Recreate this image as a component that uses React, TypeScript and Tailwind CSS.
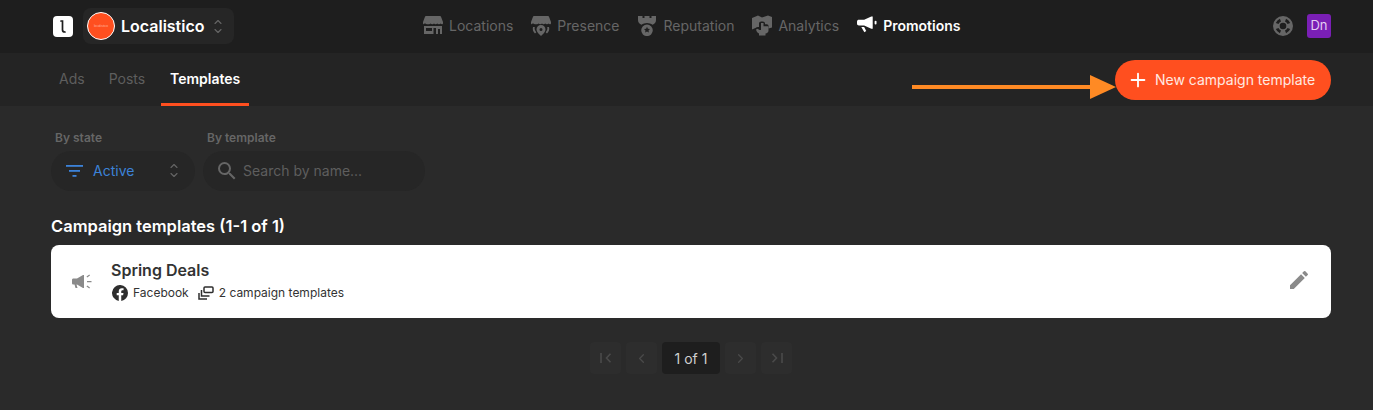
import { ChevronLeft, ChevronRight, Plus } from 'lucide-react';

function Awning() {
  return (
    <path d="M3 1h14a1 1 0 0 1 1 .7L20 7v1.200c0 .6-.5 1-1 1-.6 0-1-.5-1.300-.8-.4.5-1 .8-1.700.8s-1.300-.3-1.700-.8c-.4.5-1 .8-1.700.8s-1.300-.3-1.600-.8c-.4.5-1 .8-1.700.8s-1.300-.3-1.700-.8c-.4.5-1 .8-1.700.8S2.900 9 2.300 8.400 1 9.200 1 9.200c-.5 0-1-.4-1-1V7l2-5.300A1 1 0 0 1 3 1z" />
  );
}

function LocationsIcon() {
  return (
    <svg width="20" height="20" viewBox="0 0 20 20" fill="currentColor">
      <Awning />
      <path fillRule="evenodd" d="M1 11h18v8h-6v-6h-2.500v6H1v-8zm2 2v3h6v-3H3zm12 1v5h2v-5h-2z" />
    </svg>
  );
}

function PresenceIcon() {
  return (
    <svg width="20" height="21" viewBox="0 0 20 21" fill="currentColor">
      <Awning />
      <path fillRule="evenodd" d="M10 10a4.500 4.500 0 0 1 4.500 4.500c0 2.500-2.500 4.800-4.500 6.500-2-1.700-4.500-4-4.500-6.500A4.500 4.500 0 0 1 10 10zm0 3a1.500 1.500 0 1 0 0 3 1.500 1.500 0 0 0 0-3z" />
      <path d="M2 12h1.800c-.6 2 .2 3.600 1.500 5.200L4 18.500C2 16.500 1.300 14.500 2 12zM18 12h-1.800c.6 2-.2 3.600-1.500 5.200l1.300 1.300c2-2 2.700-4 2-6.500z" />
    </svg>
  );
}

function ReputationIcon() {
  return (
    <svg width="20" height="21" viewBox="0 0 20 21" fill="currentColor">
      <path d="M1 1h4.500v2h2V1h5v2h2V1H19v4c0 2.500-1.500 4-3.500 4.800C14 8.700 12 8 10 8s-4 .7-5.500 1.800C2.500 9 1 7.500 1 5V1z" />
      <path fillRule="evenodd" d="M10 9.500a5.800 5.800 0 1 1 0 11.600 5.800 5.800 0 0 1 0-11.600zm0 2.300l.9 1.900 2.100.3-1.500 1.500.4 2.100-1.900-1-1.900 1 .4-2.100L7 14l2.100-.3.900-1.900z" />
    </svg>
  );
}

function AnalyticsIcon() {
  return (
    <svg width="20" height="21" viewBox="0 0 20 21" fill="currentColor">
      <path d="M0 3l6-2.500 4 2 6-2 4 1.500v10.500l-3.500 1V11c0-1-.7-1.700-1.700-1.700H13V8.500c0-1.200-1-2-2.200-2h-1.600c-1.200 0-2.200.8-2.200 2V12H6c-1 0-1.800.5-2.600 1L0 14.500V3z" />
      <path d="M9 8h2.500v3.200h3.800c.6 0 1.200.5 1.200 1.200v3.100c0 1.600-1.300 3-3 3v2H7v-2c-1.200-.5-2-1.500-2.500-2.500L4 14.500l1.500-.8 2 1.300h1.500V8z" />
    </svg>
  );
}

function PromotionsIcon() {
  return (
    <svg width="20" height="20" viewBox="0 0 21 20" fill="currentColor">
      <path d="M0 6.500C0 5 1 4.500 2 4.500h5.500L15 1h1.500v13H15l-7.500-3.500H2c-1 0-2-.5-2-2V6.500z" />
      <rect x="18.500" y="5.500" width="2" height="4" rx="1" />
      <path d="M4.500 12h3l2.200 4.300-2 1.200L4.500 12z" />
    </svg>
  );
}

function HelpIcon() {
  return (
    <svg width="20" height="20" viewBox="0 0 20 20" fill="currentColor" className="text-[#666]">
      <path
        fillRule="evenodd"
        d="M10 0a10 10 0 1 1 0 20 10 10 0 0 1 0-20zm0 6.700a3.300 3.300 0 1 0 0 6.600 3.300 3.300 0 0 0 0-6.600zM6.900 2.800a8 8 0 0 0-4.100 4.100l2.700 1.100a5 5 0 0 1 2.500-2.500L6.900 2.800zm6.200 0L12 5.500A5 5 0 0 1 14.500 8l2.700-1.100a8 8 0 0 0-4.100-4.100zM5.500 12l-2.700 1.100a8 8 0 0 0 4.100 4.100L8 14.500A5 5 0 0 1 5.500 12zm9 0a5 5 0 0 1-2.500 2.500l1.100 2.700a8 8 0 0 0 4.100-4.100L14.500 12z"
      />
    </svg>
  );
}

function UpDown() {
  return (
    <svg width="8" height="15" viewBox="0 0 8 15" fill="none" stroke="#666" strokeWidth="1.100" strokeLinecap="round" strokeLinejoin="round">
      <path d="M1 4.500L4 1.500l3 3M1 10.500l3 3 3-3" />
    </svg>
  );
}

function PageIcon({ kind }: { kind: 'first' | 'prev' | 'next' | 'last' }) {
  return (
    <div className="flex h-8 w-[31px] items-center justify-center rounded bg-[#2d2d2d] text-[#4a4a4a]">
      {kind === 'prev' && <ChevronLeft size={15} strokeWidth={2} />}
      {kind === 'next' && <ChevronRight size={15} strokeWidth={2} />}
      {kind === 'first' && (
        <svg width="12" height="10" viewBox="0 0 12 10" fill="none" stroke="currentColor" strokeWidth="1.600">
          <path d="M1 0v10M10.500 .8L6.500 5l4 4.200" />
        </svg>
      )}
      {kind === 'last' && (
        <svg width="12" height="10" viewBox="0 0 12 10" fill="none" stroke="currentColor" strokeWidth="1.600">
          <path d="M11 0v10M1.500 .8L5.500 5l-4 4.200" />
        </svg>
      )}
    </div>
  );
}

export default function App() {
  const nav = [
    { label: 'Locations', icon: <LocationsIcon /> },
    { label: 'Presence', icon: <PresenceIcon /> },
    { label: 'Reputation', icon: <ReputationIcon /> },
    { label: 'Analytics', icon: <AnalyticsIcon /> },
  ];

  return (
    <div className="relative flex h-[410px] w-[1373px] flex-col overflow-hidden bg-[#2a2a2a] font-['Inter',sans-serif]">
      {/* top bar */}
      <header className="flex h-[53px] items-center bg-[#1e1e1e] pb-px pl-[53px] pr-[42px]">
        <div className="flex h-[21px] w-5 items-center justify-center rounded-[4px] bg-white">
          <svg width="8" height="13" viewBox="0 0 8 13" fill="none" stroke="#1e1e1e" strokeWidth="1.700" strokeLinecap="round">
            <path d="M2 1h1.500v9c0 1.300.8 2 2.500 2" />
          </svg>
        </div>
        <div className="ml-[10px] flex h-9 w-[151px] items-center rounded-lg bg-[#262626] pl-1">
          <div className="flex h-7 w-7 items-center justify-center rounded-full border-[1.500px] border-white bg-[#ff4f1f]">
            <span className="text-[3px] text-[#ffb9a3]">localistico</span>
          </div>
          <span className="ml-[6px] text-[16px] font-semibold text-white">Localistico</span>
          <span className="ml-[9px] flex">
            <UpDown />
          </span>
        </div>
        <nav className="-mt-[2px] ml-[189px] flex items-center gap-[18px]">
          {nav.map((item) => (
            <div key={item.label} className="flex items-center gap-[6px] text-[#666]">
              {item.icon}
              <span className="text-[14px]">{item.label}</span>
            </div>
          ))}
          <div className="flex items-center gap-[6px] text-white">
            <PromotionsIcon />
            <span className="text-[14px] font-semibold">Promotions</span>
          </div>
        </nav>
        <div className="ml-auto flex items-center gap-[14px]">
          <HelpIcon />
          <div className="flex h-6 w-6 items-center justify-center rounded-[3px] bg-[#7a1fb5] text-[13px] text-[#e4cdf3]">Dn</div>
        </div>
      </header>

      {/* sub nav */}
      <div className="flex h-[53px] items-center justify-between bg-[#242424] pl-[51px] pr-[42px]">
        <div className="flex h-full items-center pb-[2px]">
          <div className="px-2 text-[14px] text-[#5e5e5e]">Ads</div>
          <div className="ml-4 text-[14px] text-[#5e5e5e]">Posts</div>
          <div className="relative ml-4 flex h-full w-[88px] items-center justify-center text-[14px] font-semibold text-white">
            Templates
            <div className="absolute -bottom-[2px] left-0 right-0 h-[3px] bg-[#ff4f1f]" />
          </div>
        </div>
        <button className="flex h-10 w-[216px] items-center rounded-full bg-[#ff4f1f] pl-3 text-[14px] text-[#ffe9e1]">
          <Plus size={22} strokeWidth={2} className="text-white" />
          <span className="ml-[6px]">New campaign template</span>
        </button>
      </div>

      {/* filters */}
      <main className="flex flex-col pl-[51px] pr-[42px] pt-6">
        <div className="flex gap-2">
          <div className="flex flex-col">
            <label className="pl-1 text-[12px] font-semibold leading-4 text-[#666]">By state</label>
            <div className="mt-[5px] flex h-10 w-[144px] items-center rounded-full bg-[#262626] pb-px pl-[15px] pr-[17px]">
              <svg width="18" height="12" viewBox="0 0 18 12" fill="#3c82d8">
                <rect x="0" y="0" width="17" height="1.800" />
                <rect x="3" y="5" width="11" height="1.800" />
                <rect x="6.500" y="10" width="4" height="1.800" />
              </svg>
              <span className="ml-[9px] text-[14px] text-[#3c82d8]">Active</span>
              <span className="ml-auto flex">
                <UpDown />
              </span>
            </div>
          </div>
          <div className="flex flex-col">
            <label className="pl-1 text-[12px] font-semibold leading-4 text-[#666]">By template</label>
            <div className="mt-[5px] flex h-10 w-[222px] items-center rounded-full bg-[#262626] pb-px pl-3">
              <svg width="24" height="24" viewBox="0 0 24 24" fill="#666">
                <path d="M15.500 14h-.79l-.28-.27A6.470 6.470 0 0 0 16 9.500 6.500 6.500 0 1 0 9.500 16c1.610 0 3.090-.59 4.230-1.570l.27.28v.79l5 4.990L20.490 19l-4.990-5zm-6 0C7.010 14 5 11.990 5 9.500S7.010 5 9.500 5 14 7.010 14 9.500 11.990 14 9.500 14z" />
              </svg>
              <span className="ml-1 text-[14px] text-[#5e5e5e]">Search by name...</span>
            </div>
          </div>
        </div>

        <h2 className="mt-[25px] text-[16.500px] font-semibold leading-5 text-white">Campaign templates (1-1 of 1)</h2>

        <div className="mt-[9px] flex h-[73px] w-[1280px] items-center rounded-lg bg-white pl-[21px] pr-[20px]">
          <svg width="22" height="18" viewBox="0 0 22 18" fill="#8a8a8a">
            <path d="M0 7c0-1 .6-1.500 1.500-1.500H5L11 2h1v13h-1L5 11.500h-.5l1 3.500H3.500l-1-3.500h-1C.6 11.500 0 11 0 10V7z" />
            <path d="M15 8h4.500v1.300H15zM14.500 3.500l2.800-2 .7 1-2.800 2zM14.500 13.500l2.800 2 .7-1-2.800-2z" />
          </svg>
          <div className="ml-[17px] flex flex-col">
            <div className="-mt-[2px] text-[16px] font-semibold leading-5 text-[#333]">Spring Deals</div>
            <div className="mt-[5px] flex items-center pl-px text-[12px] leading-4 text-[#333]">
              <svg width="16" height="16" viewBox="0 0 16 16" fill="#2e2e2e">
                <path d="M16 8a8 8 0 1 0-9.250 7.900v-5.600H4.700V8h2.050V6.240c0-2 1.200-3.100 3-3.100.88 0 1.800.16 1.800.16v1.970h-1c-1 0-1.300.62-1.300 1.250V8h2.220l-.36 2.300H9.250v5.600A8 8 0 0 0 16 8z" />
              </svg>
              <span className="ml-[5px]">Facebook</span>
              <svg className="ml-[9px]" width="16" height="14" viewBox="0 0 16 14" fill="none" stroke="#2e2e2e" strokeWidth="1.500">
                <rect x="6" y="1" width="9" height="5.500" rx="1" />
                <path d="M3.500 4v6h8M1 7v6h8" />
              </svg>
              <span className="ml-[5px]">2 campaign templates</span>
            </div>
          </div>
          <svg className="-mt-[3px] ml-auto" width="24" height="24" viewBox="0 0 24 24" fill="#8a8a8a">
            <path d="M3 17.250V21h3.750L17.810 9.940l-3.750-3.750L3 17.250zM20.710 7.040a1 1 0 0 0 0-1.410l-2.340-2.340a1 1 0 0 0-1.410 0l-1.830 1.830 3.750 3.750 1.830-1.830z" />
          </svg>
        </div>

        {/* pagination */}
        <div className="mt-6 flex w-[1280px] items-center justify-center gap-[5px]">
          <PageIcon kind="first" />
          <PageIcon kind="prev" />
          <div className="flex h-8 w-[58px] items-center justify-center rounded bg-[#1e1e1e] text-[14px] text-[#d0d0d0]">1 of 1</div>
          <PageIcon kind="next" />
          <PageIcon kind="last" />
        </div>
      </main>

      {/* annotation arrow */}
      <svg className="absolute left-[912px] top-[74px]" width="204" height="26" viewBox="0 0 204 26" fill="#ff8a24">
        <rect x="0" y="11" width="180" height="4" />
        <path d="M178 1l26 12-26 12z" />
      </svg>
    </div>
  );
}
